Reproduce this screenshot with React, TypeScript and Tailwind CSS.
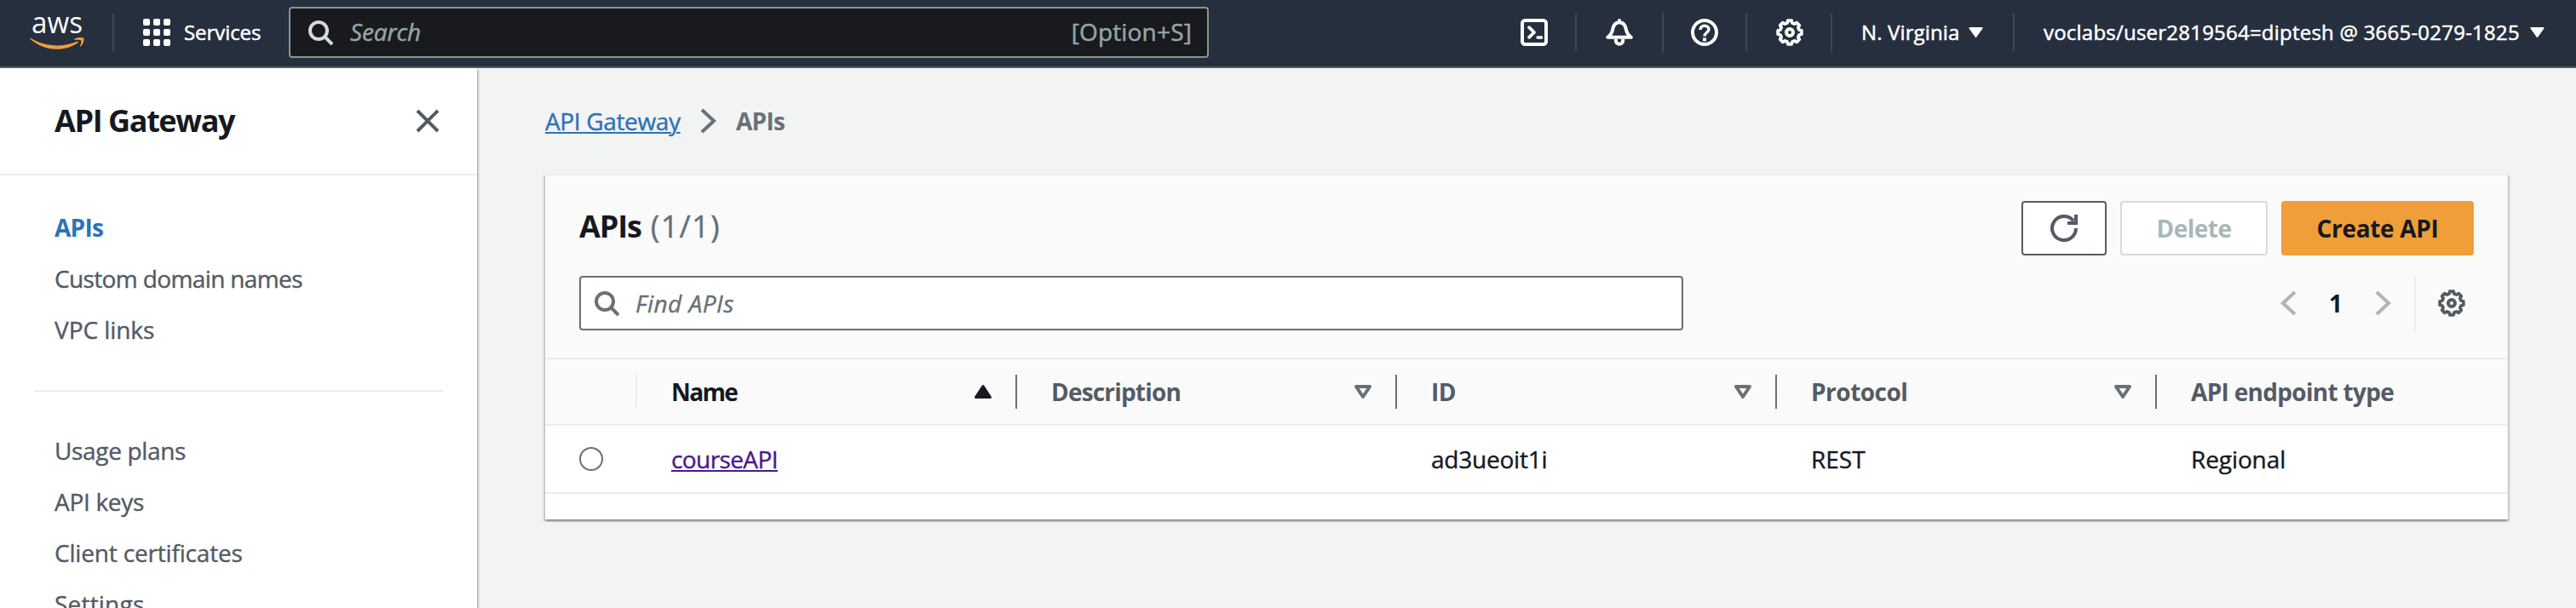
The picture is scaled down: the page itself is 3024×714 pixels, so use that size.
import type { ReactNode } from "react";

const teeth = Array.from({ length: 8 }, (_, k) => {
  const at = (deg: number, r: number) => {
    const a = (deg * Math.PI) / 180;
    return `${(8 + r * Math.sin(a)).toFixed(2)} ${(8 - r * Math.cos(a)).toFixed(2)}`;
  };
  const a = k * 45;
  return [at(a - 9, 7), at(a + 9, 7), at(a + 15, 5.7), at(a + 30, 5.7)].join(" L");
}).join(" L");

function Icon({ children, className = "" }: { children: ReactNode; className?: string }) {
  return (
    <svg viewBox="0 0 16 16" className={`size-8 shrink-0 ${className}`} fill="none" stroke="currentColor" strokeWidth="2">
      {children}
    </svg>
  );
}

const Gear = ({ className = "" }: { className?: string }) => (
  <Icon className={className}>
    <path d={`M${teeth}Z`} strokeLinejoin="round" strokeWidth="1.9" />
    <circle cx="8" cy="8" r="2" />
  </Icon>
);

const Magnifier = ({ className = "" }: { className?: string }) => (
  <Icon className={className}>
    <circle cx="7" cy="7" r="5" />
    <path d="M10.6 10.6 15 15" />
  </Icon>
);

const Chevron = ({ className = "" }: { className?: string }) => (
  <Icon className={className}>
    <path d="M4 1.5 11 8l-7 6.5" />
  </Icon>
);

const Caret = ({ className = "" }: { className?: string }) => (
  <svg viewBox="0 0 17 12" className={`h-3 w-[17px] shrink-0 ${className}`} fill="currentColor" stroke="currentColor" strokeWidth="2" strokeLinejoin="round">
    <path d="M1.4 1h14.2L8.5 11Z" />
  </svg>
);

const Rule = ({ className = "" }: { className?: string }) => (
  <span className={`h-11 w-0.5 shrink-0 bg-[#414750] ${className}`} />
);

const Bold = ({ children, className = "" }: { children: ReactNode; className?: string }) => (
  <span className={`font-bold [-webkit-text-stroke:0px] ${className}`}>{children}</span>
);

function Logo() {
  return (
    <svg viewBox="35 -1 64 76" className="h-[76px] w-16 shrink-0">
      <text x="37" y="38" textLength="60" lengthAdjust="spacingAndGlyphs" fontSize="35" fontWeight="500" fontFamily='"Open Sans", sans-serif' fill="#fff">
        aws
      </text>
      <path d="M35.4 44.6c.2-.7.8-.8 1.6-.3C46 49.700 56 52.400 66.700 52.400c8 0 16.500-1.700 23.700-4.700 1.200-.5 2.100.8 1 1.600-6.700 5-16.300 7.500-24.700 7.500-11.700 0-22.300-4.300-30.800-11.500-.3-.2-.5-.5-.5-.7Z" fill="#f09e39" />
      <path d="M87.300 44.700c3-2.100 9.800-2.300 10.900-1 1 1.300-.3 7-3.300 9.600-.6.5-1.200.2-.9-.5.9-2.100 1.900-5.500 1.200-6.400-.700-.9-4.800-.8-7.400-.7-.8 0-1.200-.6-.5-1Z" fill="#f09e39" />
    </svg>
  );
}

function TopBar() {
  return (
    <header className="flex h-20 shrink-0 border-b-2 border-[#545b64] bg-[#262f3e] text-2xl font-medium text-white [-webkit-text-stroke:0.5px]">
      <div className="flex h-[76px] items-center pl-[35px]">
        <Logo />
        <Rule className="ml-[33px]" />
        <button className="ml-[34px] flex w-[171px] items-center">
          <span className="grid size-8 grid-cols-3 gap-1">
            {Array.from({ length: 9 }, (_, i) => (
              <span key={i} className="size-2 rounded-xs bg-white" />
            ))}
          </span>
          <span className="pl-4 tracking-[-0.07px]">Services</span>
        </button>
        <div className="flex h-[60px] w-[1080px] items-center rounded-sm border-2 border-[#879596] bg-[#191a1e] pr-[18px] pl-[19px] text-[28px] font-normal text-[#95a5a6]">
          <Magnifier className="text-[#d5dbdb]" />
          <span className="ml-[19px] tracking-[-0.13px] italic">Search</span>
          <span className="ml-auto tracking-[0.17px]">[Option+S]</span>
        </div>
        <Icon className="ml-[366px]">
          <rect x="1" y="1" width="14" height="14" rx="1.6" />
          <path d="m5 5.100 3 2.900-3 2.900" strokeLinecap="round" strokeLinejoin="round" strokeWidth="1.900" />
          <path d="M10 11h2.300" strokeLinecap="round" strokeWidth="1.700" />
        </Icon>
        <Rule className="ml-8" />
        <Icon className="ml-[34px]">
          <path d="M8 1v1M1.100 10.900C3 9.600 3.700 8.200 4.100 6.200 4.600 3.400 6 2.100 8 2.100s3.400 1.300 3.900 4.100c.4 2 1.100 3.400 3 4.700Z" strokeLinecap="round" strokeLinejoin="round" />
          <path d="M5.900 12v.8a2.100 2.100 0 0 0 4.200 0V12" />
        </Icon>
        <Rule className="ml-[34px] h-12" />
        <Icon className="ml-8">
          <circle cx="8" cy="8" r="7" />
          <path d="M5.500 6.500C5.500 4.900 6.600 4.100 8 4.100s2.500.8 2.500 2.200C10.500 8 8 8.100 8 10.300" strokeWidth="1.700" />
          <path d="M7 12.200h2" />
        </Icon>
        <Rule className="ml-8" />
        <Gear className="ml-[34px]" />
        <Rule className="ml-8" />
        <button className="ml-[34px] flex items-center">
          <span className="w-[126px] text-left whitespace-nowrap tracking-[0.13px]">N. Virginia</span>
          <Caret />
        </button>
        <Rule className="ml-[35px]" />
        <button className="ml-[34px] flex items-center">
          <span className="w-[571px] text-left whitespace-nowrap tracking-[0.22px]">voclabs/user2819564=diptesh @ 3665-0279-1825</span>
          <Caret />
        </button>
      </div>
    </header>
  );
}

function Sidebar() {
  return (
    <aside className="relative h-full w-[560px] shrink-0 bg-white text-[28px] leading-[60px] text-[#545b64] shadow-[0_2px_2px_0_rgba(0,28,36,0.3),2px_2px_2px_0_rgba(0,28,36,0.2)]">
      <div className="flex h-[126px] items-center justify-between border-b-2 border-[#eaeded] pr-[42px] pl-16">
        <h2 className="text-4xl text-[#16191f]">
          <Bold className="tracking-[-1.4px]">API Gateway</Bold>
        </h2>
        <Icon>
          <path d="m2 2 12 12M14 2 2 14" />
        </Icon>
      </div>
      <nav className="flex flex-col pt-[31px] pl-16">
        <a className="text-[#2e72b8]">
          <Bold className="tracking-[-0.72px]">APIs</Bold>
        </a>
        <a className="tracking-[-0.63px]">Custom domain names</a>
        <a className="tracking-[-0.06px]">VPC links</a>
      </nav>
      <hr className="mx-10 mt-[41px] mb-[39px] border-t-2 border-[#eaeded]" />
      <nav className="flex flex-col pl-16">
        <a className="tracking-[-0.34px]">Usage plans</a>
        <a className="tracking-[-0.3px]">API keys</a>
        <a className="tracking-[-0.18px]">Client certificates</a>
        <a className="tracking-[0.2px]">Settings</a>
      </nav>
    </aside>
  );
}

function HeadCell({ children, sorted, last }: { children: ReactNode; sorted?: boolean; last?: boolean }) {
  return (
    <div className="flex items-center">
      <div className={`flex flex-1 items-center justify-between pr-[22px] pl-10 ${sorted ? "text-[#16191f]" : "text-[#545b64]"}`}>
        {children}
        {!last && (
          <svg viewBox="0 0 32 32" className={`size-8 ${sorted ? "" : "text-[#687078]"}`} stroke="currentColor" strokeLinejoin="round">
            {sorted ? (
              <path d="M7.500 22.500 16 9.500l8.500 13Z" fill="currentColor" strokeWidth="3" />
            ) : (
              <path d="M8 10h16l-8 12Z" fill="none" strokeWidth="4" />
            )}
          </svg>
        )}
      </div>
      {!last && <span className="h-10 w-0.5 bg-[#687078]" />}
    </div>
  );
}

function ApiTable() {
  return (
    <section className="mr-20 ml-20 h-[406px] border-t-2 border-[#eaeded] bg-white text-[28px] text-[#16191f] shadow-[0_2px_2px_0_rgba(0,28,36,0.3),2px_2px_2px_0_rgba(0,28,36,0.15),-2px_2px_2px_0_rgba(0,28,36,0.15)]">
      <div className="flex h-[216px] flex-col gap-6 border-b-2 border-[#eaeded] bg-[#fafafa] px-10 pt-[30px]">
        <div className="flex h-16 items-center gap-4">
          <h1 className="mr-auto flex gap-[11px] pb-1 text-4xl">
            <Bold className="tracking-[-1.12px]">APIs</Bold>
            <span className="tracking-[1.3px] text-[#687078]">(1/1)</span>
          </h1>
          <button className="flex h-16 w-[100px] items-center justify-center rounded-sm border-2 border-[#545b64] bg-white text-[#545b64]">
            <Icon>
              <path d="M15 8a7 7 0 1 1-1.500-4.300" />
              <path d="M10 5h5V0" />
            </Icon>
          </button>
          <button className="flex h-16 w-[173px] items-center justify-center rounded-sm border-2 border-[#d5dbdb] bg-white text-[#aab7b8]">
            <Bold className="tracking-[-0.5px]">Delete</Bold>
          </button>
          <button className="flex h-16 w-[226px] items-center justify-center rounded-sm bg-[#f09e39]">
            <Bold className="tracking-[-0.32px]">Create API</Bold>
          </button>
        </div>
        <div className="flex h-16 items-center">
          <div className="flex h-16 w-[1296px] items-center rounded-sm border-2 border-[#687078] bg-white pl-3.5 text-[#687078]">
            <Magnifier />
            <span className="ml-[18px] tracking-[0.5px] italic">Find APIs</span>
          </div>
          <Chevron className="ml-auto rotate-180 text-[#aab7b8]" />
          <Bold className="w-20 text-center">1</Bold>
          <Chevron className="text-[#aab7b8]" />
          <span className="ml-5 h-16 w-0.5 bg-[#eaeded]" />
          <Gear className="mr-2.5 ml-[26px] text-[#545b64]" />
        </div>
      </div>
      <div className="grid h-[78px] grid-cols-[108px_repeat(4,446px)_1fr] border-b-2 border-[#eaeded] bg-[#fafafa]">
        <div className="flex items-center justify-end">
          <span className="h-10 w-0.5 bg-[#eaeded]" />
        </div>
        <HeadCell sorted>
          <Bold className="tracking-[-1.6px]">Name</Bold>
        </HeadCell>
        <HeadCell>
          <Bold className="tracking-[-0.82px]">Description</Bold>
        </HeadCell>
        <HeadCell>
          <Bold className="tracking-[-0.5px]">ID</Bold>
        </HeadCell>
        <HeadCell>
          <Bold className="tracking-[-0.5px]">Protocol</Bold>
        </HeadCell>
        <HeadCell last>
          <Bold className="tracking-[-0.69px]">API endpoint type</Bold>
        </HeadCell>
      </div>
      <div className="grid h-20 grid-cols-[108px_repeat(4,446px)_1fr] items-center border-b-2 border-[#eaeded]">
        <span className="ml-10 size-7 rounded-full border-2 border-[#687078] bg-white" />
        <a className="pl-10 text-[#4b1a8f]">
          <span className="tracking-[-0.6px] underline decoration-2 underline-offset-2">courseAPI</span>
        </a>
        <span />
        <span className="pl-10 tracking-[-0.22px]">ad3ueoit1i</span>
        <span className="pl-10">REST</span>
        <span className="pl-10 tracking-[-0.1px]">Regional</span>
      </div>
    </section>
  );
}

export default function App() {
  return (
    <div className='flex h-[714px] w-[3024px] flex-col overflow-hidden bg-[#f2f3f3] font-["Open_Sans","Noto_Sans",sans-serif] [-webkit-text-stroke:0.4px]'>
      <TopBar />
      <div className="flex min-h-0 flex-1">
        <Sidebar />
        <main className="flex-1">
          <div className="flex h-[124px] items-center pl-20 text-[28px]">
            <a className="w-[176px] tracking-[-0.35px] text-[#2e72b8] underline decoration-2 underline-offset-2">API Gateway</a>
            <Chevron className="text-[#687078]" />
            <Bold className="pl-4 tracking-[-0.72px] text-[#687078]">APIs</Bold>
          </div>
          <ApiTable />
        </main>
      </div>
    </div>
  );
}
